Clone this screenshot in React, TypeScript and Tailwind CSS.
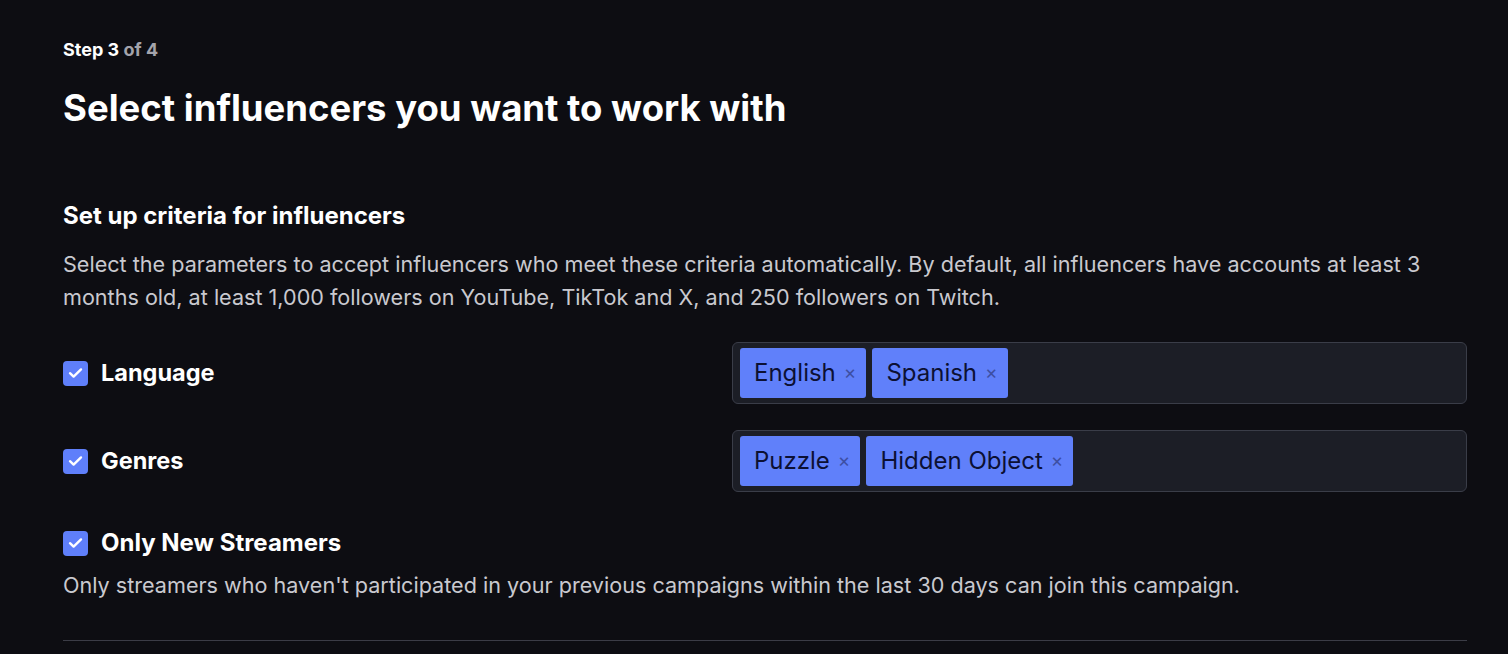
import React from "react";

const Check = () => (
  <span className="flex h-[25px] w-[25px] shrink-0 items-center justify-center rounded-[4px] bg-[#5f7ffa]">
    <svg width="15" height="12" viewBox="0 0 15 12" fill="none">
      <path d="M2 6.2L5.6 9.6L13 2.4" stroke="white" strokeWidth="2.4" strokeLinecap="round" strokeLinejoin="round" />
    </svg>
  </span>
);

const Chip = ({ label }: { label: string }) => (
  <span className="flex h-[50px] items-center gap-[8px] rounded-[3px] bg-[#6080fa] pl-[14px] pr-[10px] text-[24px] text-[#0c1033]">
    {label}
    <span className="text-[19px] text-[#3d4fa3]">×</span>
  </span>
);

const Row = ({ label, chips }: { label: string; chips: string[] }) => (
  <div className="flex items-center">
    <div className="flex w-[669px] items-center gap-[13px]">
      <Check />
      <span className="text-[23.5px] font-bold text-white">{label}</span>
    </div>
    <div className="flex h-[62px] flex-1 items-center gap-[6px] rounded-[6px] border border-[#3a3d48] bg-[#1c1e26] px-[7px]">
      {chips.map((c) => (
        <Chip key={c} label={c} />
      ))}
    </div>
  </div>
);

export default function App() {
  return (
    <div
      className="min-h-screen w-full bg-[#0d0d12] pl-[63px] pr-[41px] pt-[37px]"
      style={{ fontFamily: "Inter, 'Noto Sans', sans-serif" }}
    >
      <div className="text-[18px] font-bold leading-[26px] text-white">
        Step 3 <span className="text-[#a3a3ab]">of 4</span>
      </div>
      <h1 className="mt-[23px] text-[36.5px] font-bold leading-[44px] text-white">
        Select influencers you want to work with
      </h1>
      <h2 className="mt-[71px] text-[24px] font-bold leading-[30px] text-white">
        Set up criteria for influencers
      </h2>
      <p className="mt-[17px] text-[21.6px] leading-[33px] text-[#c9c9cf]">
        Select the parameters to accept influencers who meet these criteria automatically. By default, all influencers have accounts at least 3
        <br />
        months old, at least 1,000 followers on YouTube, TikTok and X, and 250 followers on Twitch.
      </p>
      <div className="mt-[28px] flex flex-col gap-[26px]">
        <Row label="Language" chips={["English", "Spanish"]} />
        <Row label="Genres" chips={["Puzzle", "Hidden Object"]} />
      </div>
      <div className="mt-[33px] flex items-center gap-[13px]">
        <Check />
        <span className="text-[24px] font-bold text-white">Only New Streamers</span>
      </div>
      <p className="mt-[8px] text-[21.6px] leading-[33px] text-[#c9c9cf]">
        Only streamers who haven't participated in your previous campaigns within the last 30 days can join this campaign.
      </p>
      <div className="mt-[38px] h-px w-full bg-[#3b3c46]" />
    </div>
  );
}
